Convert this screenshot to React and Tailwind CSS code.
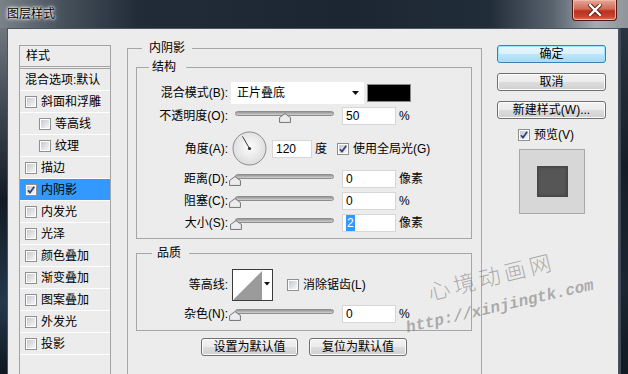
import React from 'react';

const effects = [
  { name: '斜面和浮雕' },
  { name: '等高线', sub: true },
  { name: '纹理', sub: true },
  { name: '描边' },
  { name: '内阴影', on: true },
  { name: '内发光' },
  { name: '光泽' },
  { name: '颜色叠加' },
  { name: '渐变叠加' },
  { name: '图案叠加' },
  { name: '外发光' },
  { name: '投影' },
];

function Check({ checked }) {
  return (
    <span className="flex h-[12px] w-[12px] shrink-0 items-center justify-center border border-[#8e8f8f] bg-white p-[1px]">
      <span className="flex h-full w-full items-center justify-center bg-[linear-gradient(135deg,#c6c9ce,#f6f6f6)]">
        {checked && (
          <svg width="8" height="8" viewBox="0 0 8 8">
            <path d="M1 4.2 L3 6.6 L7.2 0.8" fill="none" stroke="#2c3f7c" strokeWidth="1.7" />
          </svg>
        )}
      </span>
    </span>
  );
}

function Label({ children }) {
  return <span className="w-[91px] shrink-0 whitespace-nowrap text-right">{children}</span>;
}

function Field({ value, selected, wide = true }) {
  return (
    <div className={`flex h-[18px] shrink-0 items-center border border-[#d6d6d6] bg-white pl-[3px] ${wide ? 'w-[54px]' : 'w-[40px]'}`}>
      {selected ? <span className="bg-[#3399ff] px-[1px] text-white">{value}</span> : value}
    </div>
  );
}

// track + house-shaped thumb; pos is 0..1
function Slider({ pos }) {
  return (
    <div className="relative ml-[7px] h-[18px] w-[99px] shrink-0">
      <div className="absolute left-0 right-0 top-[4px] h-[5px] rounded-full border border-[#8d8d8d] bg-[linear-gradient(#959595,#d2d2d2)]" />
      <svg className="absolute top-[6px]" style={{ left: Math.round(pos * 99) - 6 }} width="12" height="10" viewBox="0 0 12 10">
        <path d="M6 0.5 L11.5 4.5 V9.5 H0.5 V4.5 Z" fill="#dcdcdc" stroke="#7c7c7c" />
        <path d="M6 1.8 L10.4 5 V8.5 H1.6 V5 Z" fill="#ececec" />
      </svg>
    </div>
  );
}

function SliderRow({ label, pos, value, unit, selected }) {
  return (
    <div className="flex h-[18px] items-center">
      <Label>{label}</Label>
      <Slider pos={pos} />
      <div className="ml-[8px]">
        <Field value={value} selected={selected} />
      </div>
      <span className="ml-[3px]">{unit}</span>
    </div>
  );
}

function Button({ children, primary, className = '' }) {
  return (
    <button
      className={`flex h-[18px] items-center justify-center rounded-[3px] border text-[12px] leading-none ${
        primary
          ? 'border-[#3c7fb1] bg-[linear-gradient(#eaf6fd,#d9f0fc_50%,#bee6fd_50%,#a7d9f5)] shadow-[inset_0_0_0_1px_#9fe3ff]'
          : 'border-[#707070] bg-[linear-gradient(#f2f2f2,#ebebeb_50%,#dddddd_50%,#cfcfcf)] shadow-[inset_0_0_0_1px_#fcfcfc]'
      } ${className}`}
    >
      {children}
    </button>
  );
}

function Dial() {
  return (
    <svg width="35" height="35" viewBox="0 0 35 35" className="ml-[4px] shrink-0">
      <defs>
        <radialGradient id="dialFill" cx="50%" cy="45%" r="55%">
          <stop offset="0%" stopColor="#fdfdfd" />
          <stop offset="100%" stopColor="#dcdcdc" />
        </radialGradient>
      </defs>
      <circle cx="17.5" cy="17.5" r="16.5" fill="url(#dialFill)" stroke="#8c8c8c" />
      <line x1="17.5" y1="17.5" x2="10.5" y2="5.4" stroke="#3a3a3a" strokeWidth="1" />
      <circle cx="17.5" cy="17.5" r="1.6" fill="#333" />
    </svg>
  );
}

function Contour() {
  return (
    <div className="ml-[4px] flex h-[32px] w-[41px] shrink-0 border border-[#3c3c3c] bg-white">
      <svg width="29" height="30" viewBox="0 0 29 30">
        <path d="M1 29 L29 1 V30 H1 Z" fill="#9b9b9b" />
      </svg>
      <div className="flex flex-1 items-start justify-center pt-[12px]">
        <svg width="6" height="4" viewBox="0 0 6 4">
          <path d="M0 0 H6 L3 3.5 Z" fill="#111" />
        </svg>
      </div>
    </div>
  );
}

export default function App() {
  return (
    <div className="relative h-[374px] w-[628px] overflow-hidden bg-[#141c26] font-['Liberation_Sans','Noto_Sans_CJK_SC',sans-serif] text-[12px] leading-4 text-black">
      {/* Title bar */}
      <div className="flex h-[28px] items-start justify-between bg-[linear-gradient(90deg,#7a8188,#47515c_10%,#222c38_22%,#1c2633_55%,#222d3a_78%,#59636e_88%,#a6acb2_95%,#8e949a)]">
        <span className="mt-[6px] ml-[7px] text-[12px] [text-shadow:0_0_5px_#fff,0_0_3px_#fff,0_0_2px_#fff]">图层样式</span>
        <div className="mr-[11px] flex h-[21px] w-[45px] items-center justify-center rounded-b-[4px] border border-t-0 border-[#4e1810] bg-[linear-gradient(#e8a697,#d06a56_45%,#b8321f_55%,#c9452d_85%,#e0825f)] shadow-[inset_0_0_0_1px_#f1b7a8]">
          <svg width="14" height="12" viewBox="0 0 14 12">
            <path d="M2 1 L12 11 M12 1 L2 11" stroke="#5a1a12" strokeWidth="4.2" strokeLinecap="square" />
            <path d="M2 1 L12 11 M12 1 L2 11" stroke="#fff" strokeWidth="2.4" strokeLinecap="square" />
          </svg>
        </div>
      </div>

      <div className="flex h-[346px]">
        {/* left frame */}
        <div className="w-[7px] bg-[linear-gradient(#6f767e,#3b4550_25%,#121b25_50%,#24384c_80%,#0f1720)]" />

        {/* client area */}
        <div className="flex flex-1 items-start border-t border-l border-r border-[#4a5561] bg-[#ececec]">
          {/* styles list */}
          <div className="mt-[16px] ml-[11px] h-[340px] w-[92px] shrink-0 border border-[#a3a3a3]">
            <div className="flex h-[23px] items-center border-b-[3px] border-double border-[#a3a3a3] pl-[6px]">样式</div>
            <div className="flex h-[22px] items-center border-b border-white pl-[5px] whitespace-nowrap">混合选项:默认</div>
            {effects.map((e) => (
              <div
                key={e.name}
                className={`flex h-[22px] items-center gap-[4px] border-b border-white ${e.sub ? 'pl-[19px]' : 'pl-[5px]'} ${e.on ? 'bg-[#3399ff]' : ''}`}
              >
                <Check checked={e.on} />
                <span>{e.name}</span>
              </div>
            ))}
          </div>

          {/* Inner Shadow group */}
          <fieldset className="mt-[11px] ml-[16px] h-[360px] w-[355px] shrink-0 border border-[#a6a6a6]">
            <legend className="ml-[14px] px-[7px] leading-4">内阴影</legend>
            <div className="pt-[3px] pl-[8px] pr-[9px]">
              <fieldset className="border border-[#a6a6a6]">
                <legend className="ml-[12px] pl-[3px] pr-[10px] leading-4">结构</legend>
                <div className="flex flex-col pt-[7px] pb-[6px]">
                  <div className="flex h-[22px] items-center">
                    <Label>混合模式(B):</Label>
                    <div className="ml-[3px] flex h-[22px] w-[133px] shrink-0 items-center justify-between bg-white pl-[6px] pr-[5px]">
                      <span>正片叠底</span>
                      <svg width="7" height="4" viewBox="0 0 7 4">
                        <path d="M0 0 H7 L3.5 4 Z" fill="#111" />
                      </svg>
                    </div>
                    <div className="ml-[3px] h-[18px] w-[44px] shrink-0 border border-[#8a8a8a] bg-black" />
                  </div>
                  <div className="mt-[3px]">
                    <SliderRow label="不透明度(O):" pos={0.5} value="50" unit="%" />
                  </div>
                  <div className="mt-[6px] flex h-[35px] items-center">
                    <Label>角度(A):</Label>
                    <Dial />
                    <div className="ml-[5px]">
                      <Field value="120" wide={false} />
                    </div>
                    <span className="ml-[3px]">度</span>
                    <span className="ml-[10px]">
                      <Check checked />
                    </span>
                    <span className="ml-[4px] whitespace-nowrap">使用全局光(G)</span>
                  </div>
                  <div className="mt-[4px]">
                    <SliderRow label="距离(D):" pos={0} value="0" unit="像素" />
                  </div>
                  <div className="mt-[4px]">
                    <SliderRow label="阻塞(C):" pos={0} value="0" unit="%" />
                  </div>
                  <div className="mt-[4px]">
                    <SliderRow label="大小(S):" pos={0.008} value="2" unit="像素" selected />
                  </div>
                </div>
              </fieldset>

              <fieldset className="mt-[6px] border border-[#a6a6a6]">
                <legend className="ml-[15px] pl-[5px] pr-[8px] leading-4">品质</legend>
                <div className="flex flex-col pt-[8px] pb-[7px]">
                  <div className="flex h-[32px] items-center">
                    <Label>等高线:</Label>
                    <Contour />
                    <span className="ml-[14px]">
                      <Check />
                    </span>
                    <span className="ml-[4px] whitespace-nowrap">消除锯齿(L)</span>
                  </div>
                  <div className="mt-[4px]">
                    <SliderRow label="杂色(N):" pos={0} value="0" unit="%" />
                  </div>
                </div>
              </fieldset>

              <div className="mt-[7px] flex justify-center gap-[11px]">
                <Button className="w-[97px]">设置为默认值</Button>
                <Button className="w-[98px]">复位为默认值</Button>
              </div>
            </div>
          </fieldset>

          {/* buttons column */}
          <div className="mt-[16px] ml-[15px] flex w-[109px] shrink-0 flex-col">
            <Button primary>确定</Button>
            <Button className="mt-[10px]">取消</Button>
            <Button className="mt-[10px]">新建样式(W)...</Button>
            <div className="mt-[8px] flex h-[16px] items-center gap-[4px] pl-[21px]">
              <Check checked />
              <span>预览(V)</span>
            </div>
            <div className="mt-[6px] ml-[22px] flex h-[65px] w-[66px] items-center justify-center border border-[#a9a9a9] bg-[#d7d7d7]">
              <div className="h-[31px] w-[31px] border border-[#474747] bg-[#565656] shadow-[inset_0_0_3px_#3a3a3a]" />
            </div>
          </div>
        </div>

        {/* right frame */}
        <div className="w-[9px] border-l-2 border-[#3d4a57] bg-[linear-gradient(#2a3440,#151e28_40%,#1b2632_75%,#111922)]" />
      </div>

      {/* watermark */}
      <div className="pointer-events-none absolute left-[426px] top-[262px] rotate-[-14deg] whitespace-nowrap font-['Noto_Sans_CJK_SC',sans-serif] text-[22px] font-light leading-[26px] tracking-[4px] text-[#7d7d7d]/60">
        心境动画网
      </div>
      <div className="pointer-events-none absolute left-[404px] top-[298px] rotate-[-13deg] whitespace-nowrap font-['Liberation_Mono',monospace] text-[16px] font-bold italic leading-[18px] text-[#7d7d7d]/60">
        http://xinjingtk.com
      </div>
    </div>
  );
}
